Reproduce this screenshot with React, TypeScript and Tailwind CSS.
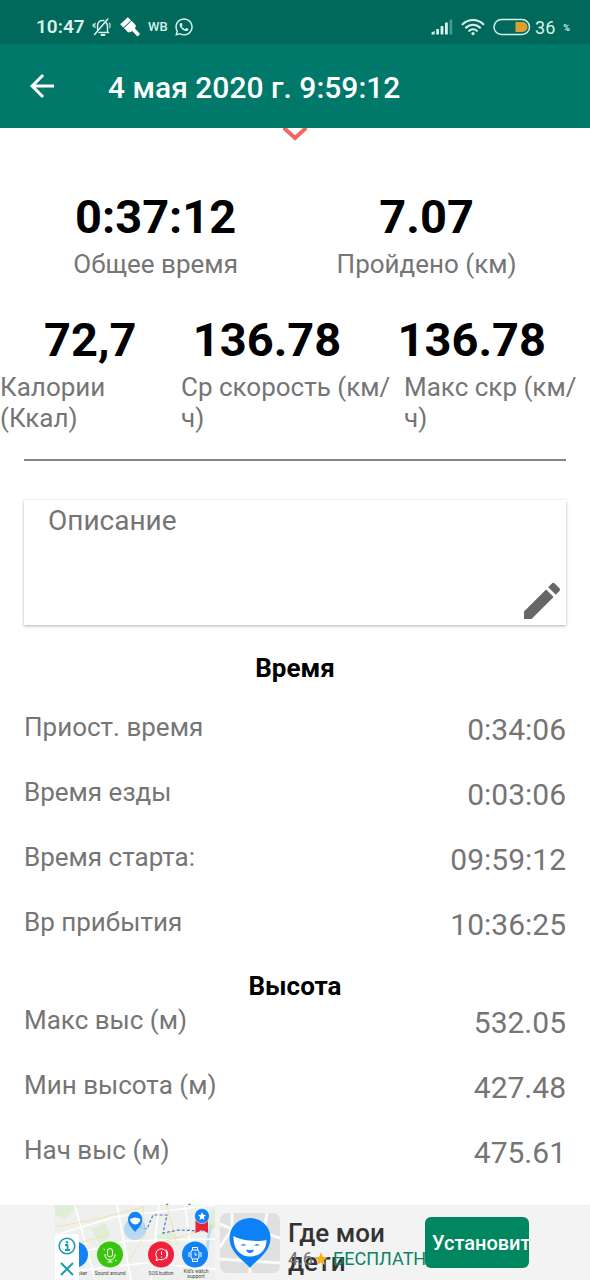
import { useState } from 'react';
import { MdArrowBack, MdEdit, MdStar } from 'react-icons/md';
import { FaWhatsapp } from 'react-icons/fa';

interface Stat {
  label: string;
  value: string;
}

const timeStats: Stat[] = [
  { label: 'Приост. время', value: '0:34:06' },
  { label: 'Время езды', value: '0:03:06' },
  { label: 'Время старта:', value: '09:59:12' },
  { label: 'Вр прибытия', value: '10:36:25' },
];

const heightStats: Stat[] = [
  { label: 'Макс выс (м)', value: '532.05' },
  { label: 'Мин высота (м)', value: '427.48' },
  { label: 'Нач выс (м)', value: '475.61' },
  { label: 'Конеч выс (м)', value: '' },
];

function BellOffIcon() {
  return (
    <svg viewBox="0 0 20 20" className="size-5" fill="none" stroke="currentColor" strokeWidth="1.5" strokeLinecap="round" aria-hidden="true">
      <path d="M7 15.5H16.5M15.5 15V9.5C15.5 7.6 14.8 6.2 13.6 5.2M11.8 3.6C8 2.6 5.6 5.4 5.6 8.6V12.6" />
      <path d="M9.5 18H12.5" strokeWidth="1.8" />
      <path d="M2.6 17.4L15.8 2" />
      <path d="M3.2 6.2C2.4 7.6 2.4 9.2 3 10.6M1.2 7.2V9.6M17.6 6.2C18.4 7.6 18.4 9.2 17.8 10.6" strokeWidth="1.2" />
    </svg>
  );
}

function BrushIcon() {
  return (
    <svg viewBox="0 0 20 20" className="size-5" fill="currentColor" aria-hidden="true">
      <path d="M0.2 7.2L7.8 0.2L11 3.2L3.4 10.6Z" />
      <path d="M4 11.2L11.6 3.8L15.8 8.2C16.2 9.2 15.6 10.4 14.8 11.2L19.6 16.6C20 17.8 18.6 19.4 17.2 19.2L12.2 14C10.6 15.2 9 15.6 8 15.2Z" />
    </svg>
  );
}

function SignalIcon() {
  return (
    <svg viewBox="0 0 22 16" className="h-4 w-[22px]" fill="currentColor" aria-hidden="true">
      <path d="M0.5 13.5L3.6 12V15.5H0.5Z" />
      <rect x="5.2" y="10" width="2.8" height="5.5" rx="0.6" />
      <rect x="9.6" y="7" width="2.8" height="8.5" rx="0.6" />
      <rect x="14" y="3.6" width="2.8" height="11.9" rx="0.6" />
      <rect x="18.6" y="0.4" width="2.6" height="15.1" rx="0.6" opacity="0.35" />
    </svg>
  );
}

function WifiIcon() {
  return (
    <svg viewBox="0 0 24 18" className="h-[18px] w-6" fill="none" stroke="currentColor" strokeWidth="2.2" strokeLinecap="round" aria-hidden="true">
      <path d="M1.6 6.2C7.4 0.6 16.6 0.6 22.4 6.2" />
      <path d="M5 9.6C9 5.8 15 5.8 19 9.6" />
      <path d="M8.2 12.8C10.4 10.8 13.6 10.8 15.8 12.8" />
      <circle cx="12" cy="15.6" r="1.6" fill="currentColor" stroke="none" />
    </svg>
  );
}

function BatteryIcon() {
  return (
    <svg viewBox="0 0 38 18" className="h-[18px] w-[38px]" aria-hidden="true">
      <rect x="1" y="1.5" width="35.5" height="15" rx="7.5" fill="none" stroke="#d5efe9" strokeWidth="1.5" />
      <path d="M22.5 4H29.5A5 5 0 0 1 29.5 14H22.5Z" fill="#e0a030" />
    </svg>
  );
}

function StatusBar() {
  return (
    <div className="flex h-11 shrink-0 items-center justify-between bg-[#00695c] pt-2.5 pr-5 pl-9 text-[#d9f1ec]">
      <div className="flex items-center">
        <span className="w-14 text-[19px] font-semibold">10:47</span>
        <BellOffIcon />
        <span className="ml-2 text-white"><BrushIcon /></span>
        <span className="ml-2 text-[13px] font-medium">WB</span>
        <FaWhatsapp size={20} className="ml-1.5" />
      </div>
      <div className="flex items-center">
        <SignalIcon />
        <span className="ml-2"><WifiIcon /></span>
        <span className="ml-2"><BatteryIcon /></span>
        <span className="ml-1 text-[18px]">36</span>
        <span className="mt-1 ml-2 text-[9px] font-bold">%</span>
      </div>
    </div>
  );
}

function StatRow({ label, value }: Stat) {
  return (
    <div className="flex h-9 items-start justify-between">
      <dt className="text-[26px] leading-[31px]">{label}</dt>
      <dd className="text-[30px] leading-9">{value}</dd>
    </div>
  );
}

function AdMap() {
  return (
    <svg viewBox="0 0 160 75" className="h-[75px] w-40 shrink-0" fontFamily="Roboto, sans-serif" aria-hidden="true">
      <rect width="160" height="75" fill="#eef0ee" />
      {/* streets and parks */}
      <path d="M0 0H24L10 14L0 10ZM36 24L50 18L56 32L44 38ZM100 30L116 26L124 34L108 40ZM140 14L160 4V22L146 26Z" fill="#d3ecc8" opacity="0.6" />
      <path d="M157 20C151 30 155 42 150 52" fill="none" stroke="#b9dcf2" strokeWidth="3" />
      <g fill="none" stroke="#fff" strokeWidth="1.6">
        <path d="M0 30L60 12L160 0M0 54L70 36L160 34M20 0L40 75M62 0L76 75M104 0L96 75M130 0L140 75M0 68L90 58L160 64" />
      </g>
      <g fill="none" stroke="#f7dc9c" strokeWidth="0.8">
        <path d="M0 22L42 14L88 2M88 0L90 30L74 56M0 44L54 30M96 40L160 22M112 0L122 40" />
      </g>
      <path d="M84 22L92 24L98 10H112L108 28L124 25L148 26" fill="none" stroke="#4a78b8" strokeWidth="1.2" strokeDasharray="3 2" />
      <circle cx="80" cy="24" r="11" fill="#9fd0f4" opacity="0.7" />
      <path d="M80 27C77 23 73 20 73 14A7.2 7.2 0 0 1 87.4 14C87.4 20 83 23 80 27Z" fill="#1283f5" />
      <path d="M75 14Q80 11 85.5 14Q85 19 80.2 19.4Q75.4 19 75 14Z" fill="#fff" />
      <path d="M140.5 15H153V28L147 25L140.5 28Z" fill="#e4233f" />
      <circle cx="147" cy="11" r="7.5" fill="#1283f5" stroke="#fff" strokeWidth="0.6" />
      <path d="M147 7L148.2 9.8L151 10L148.8 12L149.5 15L147 13.4L144.5 15L145.2 12L143 10L145.8 9.8Z" fill="#fff" />
      <circle cx="20" cy="49.5" r="13" fill="#1283f5" />
      <circle cx="55" cy="49.5" r="13" fill="#3ac40d" />
      <circle cx="106" cy="49.5" r="13" fill="#f0203c" />
      <circle cx="140" cy="49.5" r="13" fill="#1283f5" />
      <g fill="none" stroke="#fff" strokeWidth="1">
        <rect x="52.5" y="43.5" width="5" height="8.5" rx="2.5" />
        <path d="M50 49V50A5 5 0 0 0 60 50V49M55 55V57M52.5 57H57.5M48.5 44L50 45M60 55L61.5 56" />
        <path d="M101 55.5L102.2 53A5.5 5.5 0 1 1 104.5 54.5L101 55.5M106.5 46.5V50M106.5 51.5V52.5M111 44.5A8 8 0 0 1 111 54" />
        <rect x="136" y="45" width="8" height="9" rx="2" />
        <path d="M137.5 45V42.5H142.5V45M137.5 54V56.5H142.5V54M134 47V52M146 47V52M140 47.5V50H142" />
      </g>
      <g fontSize="5" fill="#444" textAnchor="middle">
        <text x="24" y="70">Tracker</text>
        <text x="55" y="70">Sound around</text>
        <text x="106" y="70">SOS button</text>
        <text x="141" y="68">Kid's watch</text>
        <text x="141" y="73">support</text>
      </g>
    </svg>
  );
}

function AdAppIcon() {
  return (
    <svg viewBox="0 0 60 60" className="size-[60px] shrink-0" aria-hidden="true">
      <clipPath id="icon-tile"><rect width="60" height="60" rx="7" /></clipPath>
      <g clipPath="url(#icon-tile)">
        <rect width="60" height="60" fill="#e0e0e0" />
        <path d="M12 0V16L0 11M12 16L0 34M0 46L60 50M47 0L44 20L60 25M30 48V60" fill="none" stroke="#fafafa" strokeWidth="3" />
      </g>
      <path d="M30 55C25 48 9.5 40 9.5 25A20.5 20 0 0 1 50.5 25C50.5 40 35 48 30 55Z" fill="#0d82f8" />
      <path d="M13.5 23C22 28 38 29 46.5 27C46.5 37 40 43.5 30 43.5C20 43.5 13 36 13.5 23Z" fill="#fff" />
      <path d="M20.5 32.5Q23.5 29.5 26.5 32.5ZM34 32.5Q37 29.5 40 32.5Z" fill="#0d82f8" />
      <path d="M26 36.5Q30 38 34 36.5Q33 40 30 40Q27 40 26 36.5Z" fill="#0d82f8" />
    </svg>
  );
}

function AdBanner() {
  return (
    <footer className="h-[75px] shrink-0 overflow-hidden bg-[#f3f3f3]">
      <div className="relative mx-auto flex h-full w-[480px]">
        <AdMap />
        <div className="absolute bottom-0 left-0 flex h-[46px] w-6 flex-col items-center justify-around bg-white text-[#1a9bb0]">
          <button type="button" aria-label="Об этой рекламе">
            <svg viewBox="0 0 18 18" className="size-[18px]" fill="none" stroke="currentColor">
              <circle cx="9" cy="9" r="7.8" strokeWidth="1.6" />
              <path d="M7 8H9.5V13M7 13H12" strokeWidth="1.8" />
              <circle cx="9" cy="5.2" r="1.2" fill="currentColor" stroke="none" />
            </svg>
          </button>
          <button type="button" aria-label="Закрыть рекламу">
            <svg viewBox="0 0 18 18" className="size-[18px]" fill="none" stroke="currentColor" strokeWidth="2">
              <path d="M3 3L15 15M15 3L3 15" />
            </svg>
          </button>
        </div>
        <div className="mt-2 ml-[5px]"><AdAppIcon /></div>
        <div className="relative ml-2 w-[137px] pt-3.5 whitespace-nowrap">
          <p className="text-[26px] leading-[29px] font-medium text-[#333]">Где мои<br />дети</p>
          <p className="absolute top-11 left-0 flex items-center text-[18px] leading-5 text-[#0a8560]">
            <span className="text-[#757575]">4.6</span>
            <MdStar size={16} className="mr-1 text-[#f5b01c]" />
            БЕСПЛАТНО
          </p>
        </div>
        <button type="button" className="relative mt-3 h-[51px] w-[104px] overflow-hidden rounded-md bg-[#01875f] pl-[7px] text-left text-[20px] font-medium whitespace-nowrap text-white">
          Установить
        </button>
      </div>
    </footer>
  );
}

export default function App() {
  const [description, setDescription] = useState('');

  return (
    <div className="flex h-screen flex-col bg-white font-[Roboto,sans-serif] text-[#757575]">
      <StatusBar />
      <header className="flex h-[84px] shrink-0 items-center bg-[#00796b] pl-6 text-white">
        <button type="button" aria-label="Назад">
          <MdArrowBack size={36} />
        </button>
        <h1 className="ml-12 pt-1 text-[30px] leading-9 font-medium">4 мая 2020 г. 9:59:12</h1>
      </header>

      <main className="relative min-h-0 flex-1 overflow-hidden pt-[57px]">
        {/* Bottom tip of the pull-down arrow */}
        <svg viewBox="0 0 24 14" className="absolute top-0 left-1/2 h-3.5 w-6 -translate-x-1/2" aria-hidden="true">
          <path d="M0 -1L12 10L24 -1" fill="none" stroke="#ee6a62" strokeWidth="4" />
        </svg>

        <div className="flex justify-around px-6 text-center">
          <div>
            <p className="text-[47px] leading-16 font-bold text-black">0:37:12</p>
            <p className="text-[26px] leading-[31px]">Общее время</p>
          </div>
          <div>
            <p className="text-[47px] leading-16 font-bold text-black">7.07</p>
            <p className="text-[26px] leading-[31px]">Пройдено (км)</p>
          </div>
        </div>

        <div className="mt-7 flex justify-between px-11 text-[47px] leading-16 font-bold text-black">
          <p>72,7</p>
          <p>136.78</p>
          <p>136.78</p>
        </div>
        <div className="grid grid-cols-[181fr_223fr_186fr] text-[26px] leading-[31px]">
          <p>Калории (Ккал)</p>
          <p>Ср скорость (км/<wbr />ч)</p>
          <p>Макс скр (км/<wbr />ч)</p>
        </div>

        <hr className="mx-6 mt-[25px] border-t-2 border-[#858585]" />

        <div className="relative mx-6 mt-[39px] h-[125px] bg-white shadow-[0_1px_3px_rgba(0,0,0,0.3)]">
          <textarea
            aria-label="Описание"
            placeholder="Описание"
            value={description}
            onChange={(e) => setDescription(e.target.value)}
            className="block size-full resize-none px-6 py-1 text-[28px] leading-[34px] outline-none placeholder:text-[#757575]"
          />
          <button type="button" aria-label="Изменить описание" className="absolute right-0 bottom-0 text-[#666]">
            <MdEdit size={48} />
          </button>
        </div>

        <h2 className="mt-7 text-center text-[26px] leading-[31px] font-bold text-black">Время</h2>
        <dl className="mx-6 mt-7 flex flex-col gap-[29px]">
          {timeStats.map((s) => <StatRow key={s.label} {...s} />)}
        </dl>

        <h2 className="mt-7 text-center text-[26px] leading-[31px] font-bold text-black">Высота</h2>
        <dl className="mx-6 mt-[3px] flex flex-col gap-[29px]">
          {heightStats.map((s) => <StatRow key={s.label} {...s} />)}
        </dl>
      </main>

      <AdBanner />
    </div>
  );
}
